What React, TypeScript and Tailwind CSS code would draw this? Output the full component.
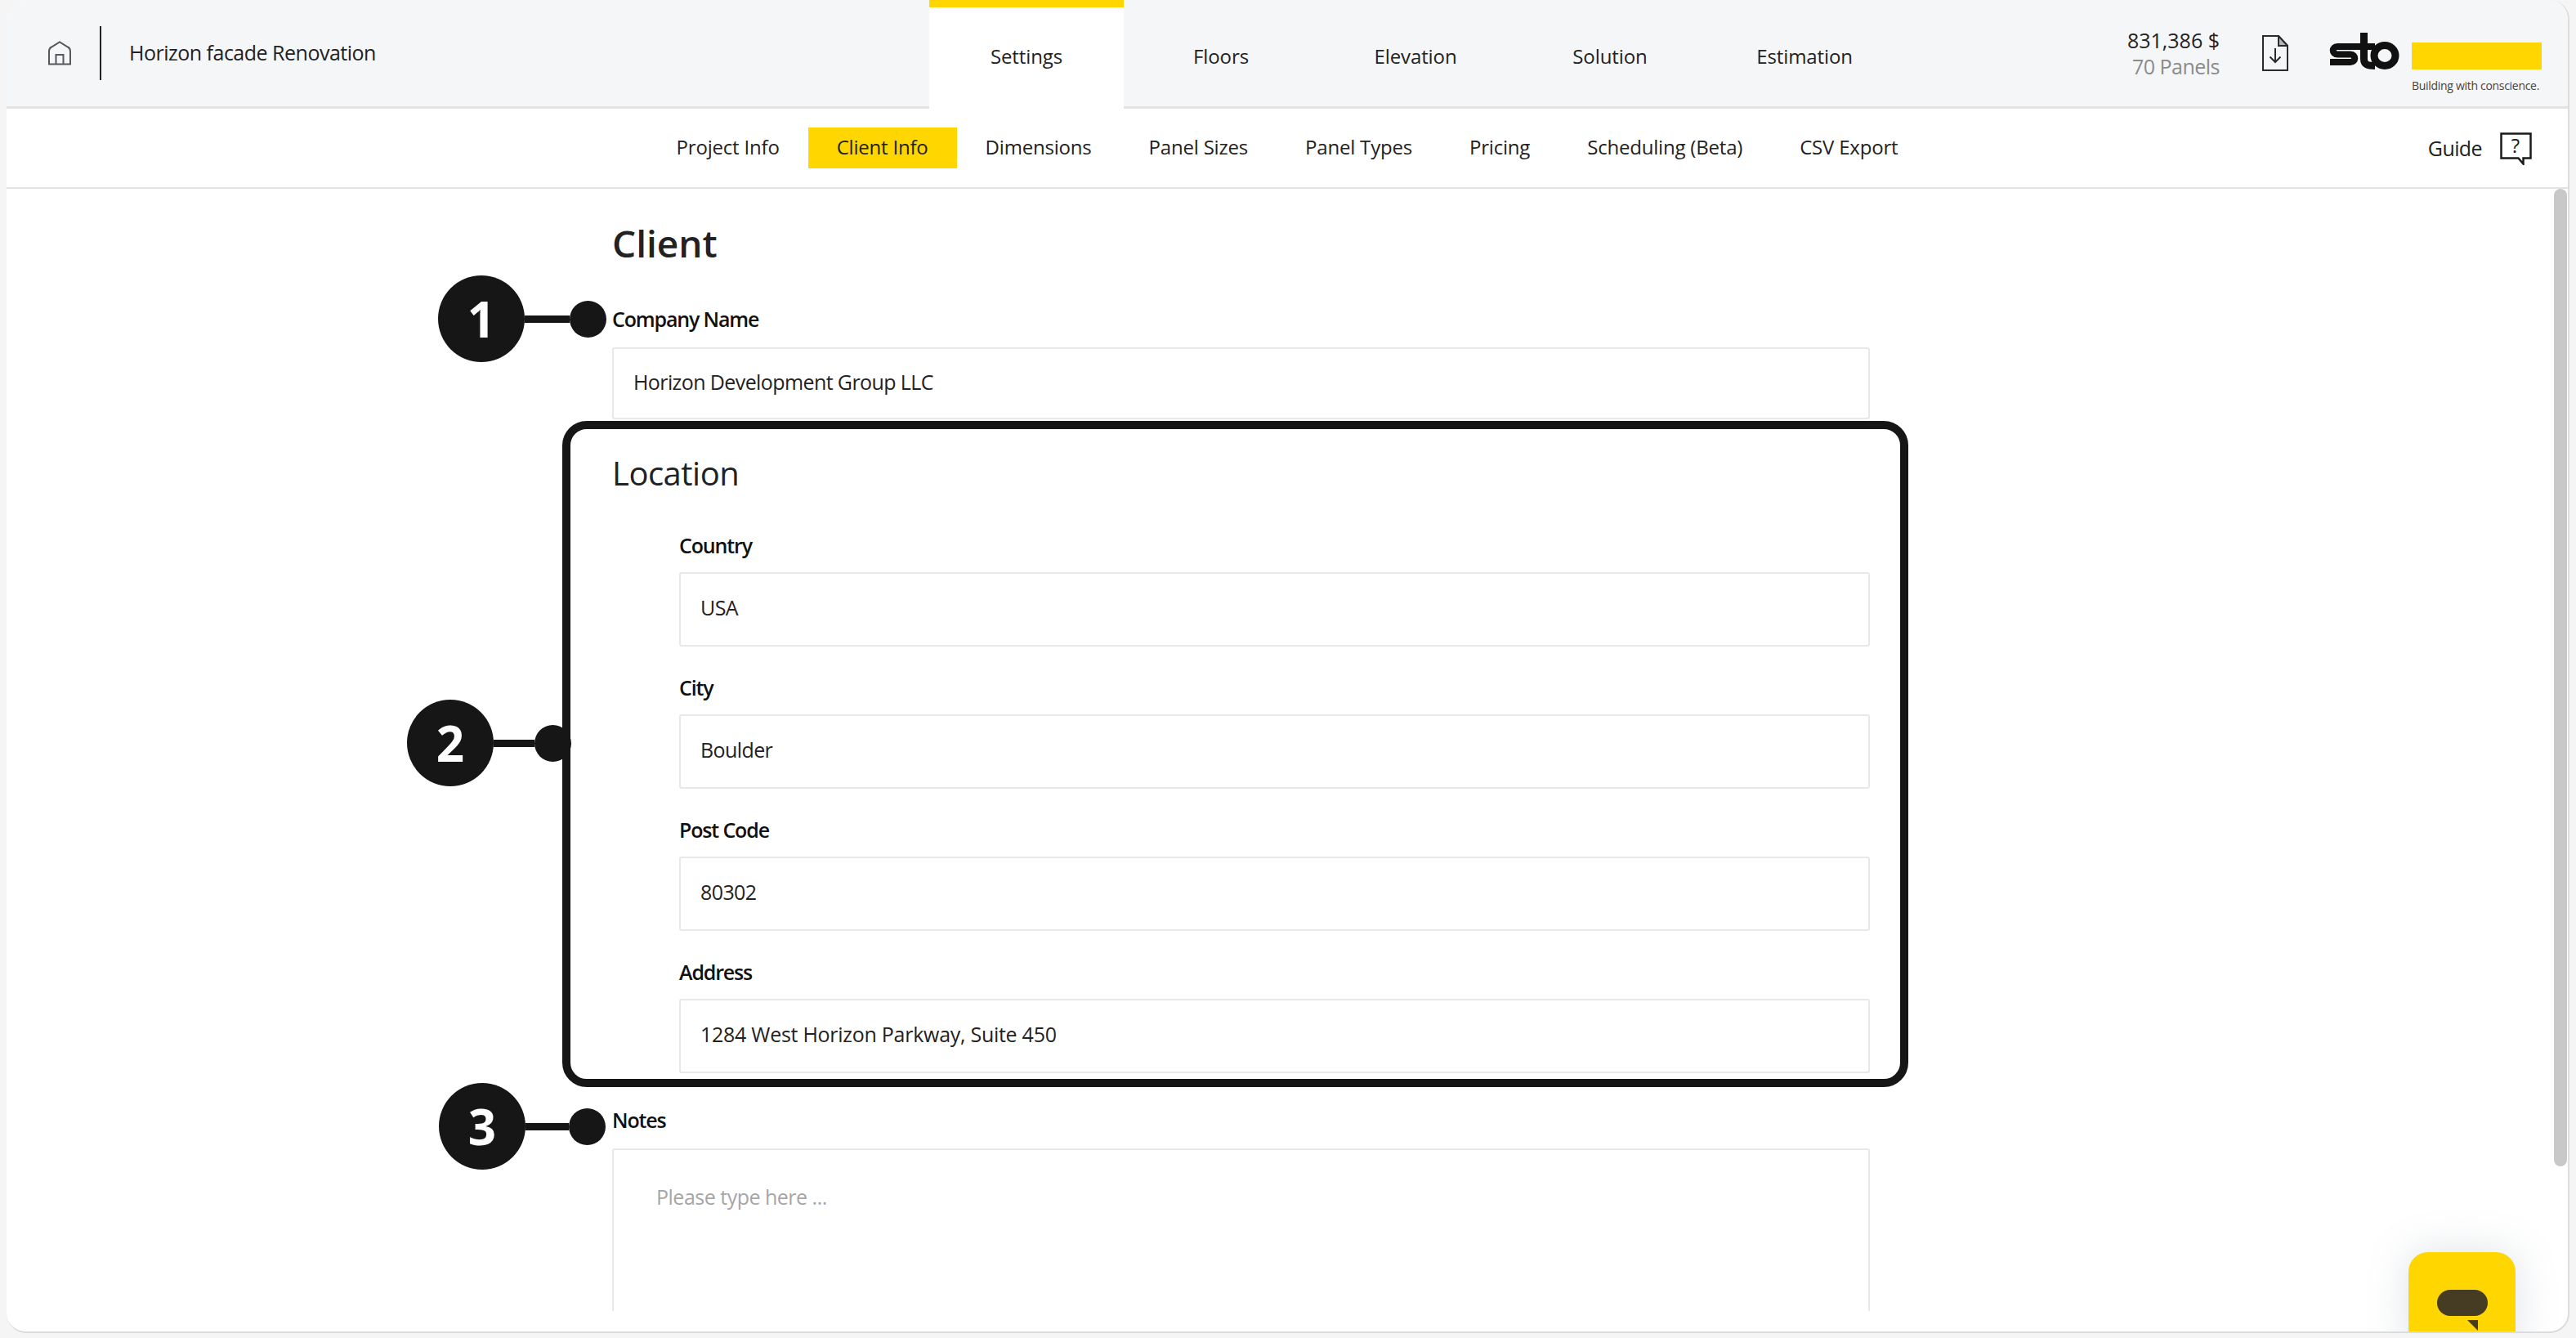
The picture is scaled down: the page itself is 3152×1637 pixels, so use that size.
const font = "font-['Open_Sans','Noto_Sans',sans-serif]"

const mainTabs = ['Settings', 'Floors', 'Elevation', 'Solution', 'Estimation']
const subTabs = ['Project Info', 'Client Info', 'Dimensions', 'Panel Sizes', 'Panel Types', 'Pricing', 'Scheduling (Beta)', 'CSV Export']

function HomeIcon() {
  return (
    <svg viewBox="0 0 30 30" className="h-[30px] w-[30px]" fill="none" stroke="#55595c" strokeWidth="2">
      <path d="M2 13Q2 9 5 7.5L15 1.5 25 7.5Q28 9 28 13V28.5H2Z" />
      <path d="M10.5 28.5V17H19.5V28.5" />
    </svg>
  )
}

function DocIcon() {
  return (
    <svg viewBox="0 0 32 44" className="h-[44px] w-[32px]" fill="none" stroke="#2b2b2b" strokeWidth="2">
      <path d="M1 1h19l11 12v30H1z" />
      <path d="M20 1v12h11z" fill="#b5b5b5" />
      <path d="M16 16v17M9.5 26.5 16 33l6.5-6.5" />
    </svg>
  )
}

function GuideIcon() {
  return (
    <div className="relative h-[40px] w-[40px]">
      <svg viewBox="0 0 40 40" className="h-[40px] w-[40px]" fill="none" stroke="#1a1a1a" strokeWidth="2.5">
        <path d="M1.5 1.5h36v30h-9v7l-6-7H1.5z" />
      </svg>
      <span className="absolute top-[-2px] left-0 w-[38px] text-center text-[24px] leading-[36px] text-[#1a1a1a]">?</span>
    </div>
  )
}

function StoLogo() {
  return (
    <svg viewBox="0 0 86 46" className="mb-[7px] h-[46px] w-[86px]" fill="none" stroke="#111" strokeWidth="8">
      <path d="M33 18H10C3 18 3 27.5 10 27.5H26C33 27.5 33 37 26 37H1" />
      <path d="M42.5 1V33C42.5 40 47 41.5 56 41.5" strokeWidth="9" />
      <path d="M30 18H56" />
      <ellipse cx="68" cy="29" rx="13" ry="12.5" strokeWidth="9" />
    </svg>
  )
}

function Field({ label, value, indent, short, looseText }: { label: string; value: string; indent?: boolean; short?: boolean; looseText?: boolean }) {
  return (
    <div className={indent ? 'ml-[82px]' : ''}>
      <label className="block text-[25px] leading-[36px] font-semibold tracking-[-1.15px] text-[#111]">{label}</label>
      <div
        className={`flex items-center rounded-[3px] border-2 border-[#e8e8e8] bg-white px-[24px] pb-[3px] text-[25px] text-[#222] ${
          looseText ? 'tracking-[-0.27px]' : 'tracking-[-0.6px]'
        } ${indent ? 'mt-[15px]' : 'mt-[17px]'} ${short ? 'h-[88px]' : 'h-[91px]'}`}
      >
        {value}
      </div>
    </div>
  )
}

function Callout({ n, className, lineClass }: { n: string; className: string; lineClass: string }) {
  return (
    <div className={`absolute flex items-center ${className}`}>
      <div className="flex h-[106px] w-[106px] items-center justify-center rounded-full bg-[#161616] text-[60px] font-bold text-white">{n}</div>
      <div className={`h-[9px] bg-[#161616] ${lineClass}`} />
      <div className="h-[45px] w-[45px] rounded-full bg-[#161616]" />
    </div>
  )
}

export default function App() {
  return (
    <div className={`h-[1637px] w-[3152px] overflow-hidden bg-[#f5f5f5] pr-[8px] pb-[6px] pl-[8px] ${font}`}>
      <div className="relative flex h-full flex-col overflow-hidden rounded-[24px] border-r-2 border-b-2 border-[#dcdcdc] bg-white">
        <header className="relative flex h-[133px] shrink-0 border-b-[3px] border-[#e2e3e4] bg-[#f5f6f8]">
          <div className="flex h-[130px] w-[1129px] items-center pl-[50px]">
            <HomeIcon />
            <div className="mx-[34px] h-[66px] w-[2px] bg-[#222]" />
            <span className="text-[25px] tracking-[-0.5px] text-[#222]">Horizon facade Renovation</span>
          </div>
          <nav className="flex h-[133px]">
            {mainTabs.map((t, i) => (
              <div
                key={t}
                className={`flex w-[238px] items-center justify-center text-[24px] tracking-[-0.1px] text-[#222] ${
                  i === 0 ? 'border-t-[9px] border-[#ffd600] bg-white pb-[5px]' : 'pt-[4px]'
                }`}
              >
                {t}
              </div>
            ))}
          </nav>
          <div className="ml-[auto] flex h-[130px] items-center pr-[32px]">
            <div className="text-right text-[25px] leading-[32px]">
              <div className="text-[#222]">831,386 $</div>
              <div className="tracking-[-0.5px] text-[#8b8b8b]">70 Panels</div>
            </div>
            <div className="mr-[50px] ml-[52px]"><DocIcon /></div>
            <StoLogo />
            <div className="ml-[15px] w-[159px] pt-[34px]">
              <div className="h-[33px] bg-[#ffd600]" />
              <div className="mt-[12px] text-[14px] leading-[16px] tracking-[-0.3px] whitespace-nowrap text-[#444]">Building with conscience.</div>
            </div>
          </div>
        </header>

        <div className="relative flex h-[98px] shrink-0 items-center justify-center border-b-2 border-[#e2e3e4] bg-white">
          {subTabs.map((t) => (
            <div
              key={t}
              className={`flex h-[50px] items-center px-[35px] pb-[3px] text-[24px] tracking-[-0.2px] text-[#222] ${t === 'Client Info' ? 'bg-[#ffd600]' : ''}`}
            >
              {t}
            </div>
          ))}
          <div className="absolute top-[29px] right-[43px] flex items-center">
            <span className="mr-[22px] text-[25px] tracking-[-0.6px] text-[#222]">Guide</span>
            <GuideIcon />
          </div>
        </div>

        <main className="relative h-[1373px] shrink-0 overflow-hidden bg-white">
          <div className="ml-[741px] w-[1539px] pt-[36px]">
            <h1 className="text-[46px] leading-[60px] font-semibold text-[#222]">Client</h1>
            <div className="mt-[45px]"><Field short label="Company Name" value="Horizon Development Group LLC" /></div>
            <h2 className="mt-[38px] text-[40px] leading-[56px] tracking-[-0.5px] text-[#222]">Location</h2>
            <div className="mt-[42px] flex flex-col gap-[32px]">
              <Field indent label="Country" value="USA" />
              <Field indent label="City" value="Boulder" />
              <Field indent label="Post Code" value="80302" />
              <Field indent looseText label="Address" value="1284 West Horizon Parkway, Suite 450" />
            </div>
            <div className="mt-[39px]">
              <label className="block text-[25px] leading-[36px] font-semibold tracking-[-1.15px] text-[#111]">Notes</label>
              <div className="mt-[17px] h-[300px] rounded-[3px] border-2 border-[#e8e8e8] px-[52px] pt-[39px] text-[25px] tracking-[-0.5px] text-[#a6a6a6]">Please type here ...</div>
            </div>
          </div>

          {/* numbered annotations on top of the form */}
          <div className="absolute top-[284px] left-[680px] h-[815px] w-[1647px] rounded-[30px] border-[10px] border-[#161616]" />
          <Callout n="1" className="top-[106px] left-[528px]" lineClass="w-[55px]" />
          <Callout n="2" className="top-[625px] left-[490px]" lineClass="w-[50px]" />
          <Callout n="3" className="top-[1094px] left-[529px]" lineClass="w-[53px]" />
        </main>

        <div className="absolute top-[231px] right-[1px] h-[1196px] w-[16px] rounded-full bg-[#c8c8c8]" />

        <div className="absolute right-[64px] bottom-[-31px] flex h-[128px] w-[131px] justify-center rounded-[24px] bg-[#ffd600] pt-[46px] shadow-[0_0_50px_rgba(120,140,150,0.25)]">
          <div className="relative h-[32px] w-[62px] rounded-full bg-[#463c24]">
            <div className="absolute top-[37px] right-[12px] h-0 w-0 border-t-[13px] border-l-[13px] border-t-[#463c24] border-l-transparent" />
          </div>
        </div>
      </div>
    </div>
  )
}
